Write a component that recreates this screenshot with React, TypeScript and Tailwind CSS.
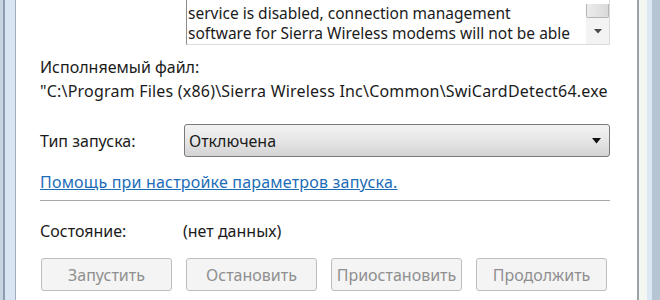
export default function App() {
  const buttons = ["Запустить", "Остановить", "Приостановить", "Продолжить"];

  return (
    <div className="flex h-[300px] w-[660px] overflow-hidden bg-white text-[16px] text-[#1b1b1b] [font-family:'Noto_Sans',sans-serif]">
      {/* left window frame */}
      <div className="flex w-[16px] shrink-0">
        <div className="w-[3px] bg-[#c6d3e1]" />
        <div className="w-[2px] bg-[#8d9caf]" />
        <div className="w-[10px] bg-[#d9e5f2]" />
        <div className="w-[1px] bg-[#a3acb7]" />
      </div>

      {/* tab page */}
      <div className="flex-1 pl-[24px] pr-[27px]">
        <div className="flex">
          <div className="w-[146px] shrink-0" />
          <div className="-mt-[17px] flex h-[62px] flex-1 border-b border-l border-r border-[#dcdcdc] border-l-[#8a8a8a]">
            <div className="flex-1 overflow-hidden pl-[1px] pt-[20px] text-[15.5px] leading-[20px]">
              <div className="whitespace-nowrap">service is disabled, connection management</div>
              <div className="whitespace-nowrap">software for Sierra Wireless modems will not be able</div>
            </div>
            <div className="flex w-[23px] flex-col">
              <div className="mt-auto h-[14px] rounded-b-[2px] border border-t-0 border-[#b5b5b5] bg-gradient-to-r from-[#ececec] to-[#d9d9d9]" />
              <div className="flex h-[26px] items-center justify-center bg-[#f3f3f3]">
                <svg width="8" height="5" viewBox="0 0 8 5">
                  <path d="M0 0 H8 L4 4.5 Z" fill="#4a4a4a" />
                </svg>
              </div>
            </div>
          </div>
        </div>

        <div className="mt-[12px] leading-[20px]">Исполняемый файл:</div>
        <div className="mt-[4px] whitespace-nowrap leading-[20px] tracking-[0.2px]">
          "C:\Program Files (x86)\Sierra Wireless Inc\Common\SwiCardDetect64.exe
        </div>

        <div className="mt-[23px] flex items-center">
          <div className="w-[144px] shrink-0">Тип запуска:</div>
          <div className="flex h-[33px] flex-1 items-center justify-between rounded-[3px] border border-[#7a7a7a] bg-gradient-to-b from-[#f3f3f3] via-[#e6e6e6] to-[#d3d3d3] pl-[4px] pr-[8px]">
            <span>Отключена</span>
            <svg width="9" height="6" viewBox="0 0 9 6">
              <path d="M0 0 H9 L4.5 5.5 Z" fill="#111" />
            </svg>
          </div>
        </div>

        <div className="mt-[15px] leading-[20px] tracking-[0.2px] text-[#1c6db8] underline decoration-[#1c6db8]">
          Помощь при настройке параметров запуска.
        </div>

        <div className="mt-[8px] h-px bg-[#a8a8a8]" />

        <div className="mt-[20px] flex leading-[20px]">
          <div className="w-[143px] shrink-0">Состояние:</div>
          <div>(нет данных)</div>
        </div>

        <div className="mt-[17px] flex gap-[14px] pl-[1px]">
          {buttons.map((b) => (
            <div
              key={b}
              className="flex h-[33px] w-[131px] items-center justify-center rounded-[3px] border border-[#bdbdbd] bg-[#f4f4f4] text-[#8f8f8f]"
            >
              {b}
            </div>
          ))}
        </div>
      </div>

      {/* right window frame */}
      <div className="flex w-[23px] shrink-0">
        <div className="w-[2px] bg-[#9ba2aa]" />
        <div className="w-[8px] bg-[#f4f6f1]" />
        <div className="w-[5px] bg-[#dbe7f2]" />
        <div className="w-[8px] bg-[#b6c5d4]" />
      </div>
    </div>
  );
}
